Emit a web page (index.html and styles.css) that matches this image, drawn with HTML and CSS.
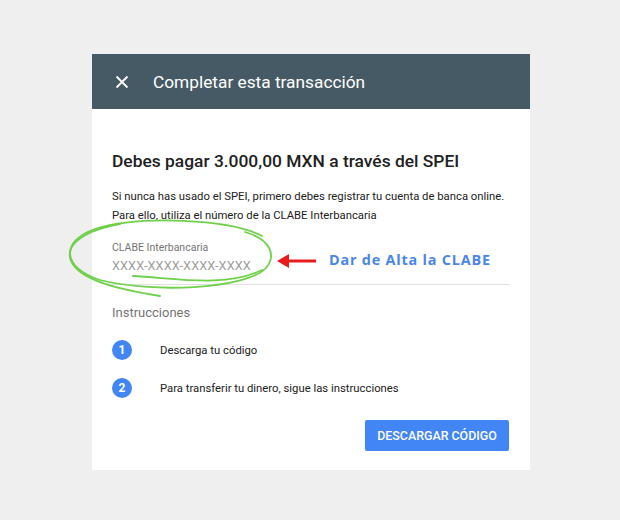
FILE: index.html
```html
<!DOCTYPE html>
<html lang="es">
<head>
<meta charset="utf-8">
<link rel="stylesheet" href="styles.css">
</head>
<body>
<div class="card">
  <div class="header">
    <svg class="close" width="14" height="14" viewBox="0 0 14 14"><path d="M1.5 1.5L12.5 12.5M12.5 1.5L1.5 12.5" stroke="#fff" stroke-width="1.8" fill="none"/></svg>
    <span class="header-title">Completar esta transacción</span>
  </div>
  <div class="content">
    <h1 class="title">Debes pagar 3.000,00 MXN a través del SPEI</h1>
    <p class="intro">Si nunca has usado el SPEI, primero debes registrar tu cuenta de banca online.<br>Para ello, utiliza el número de la CLABE Interbancaria</p>
    <div class="field">
      <div class="field-label">CLABE Interbancaria</div>
      <div class="field-value">XXXX-XXXX-XXXX-XXXX</div>
    </div>
    <div class="divider"></div>
    <div class="section">Instrucciones</div>
    <ol class="steps">
      <li class="step"><span class="num">1</span><span class="step-text">Descarga tu código</span></li>
      <li class="step"><span class="num">2</span><span class="step-text">Para transferir tu dinero, sigue las instrucciones</span></li>
    </ol>
    <div class="actions"><button class="btn">DESCARGAR CÓDIGO</button></div>
  </div>
</div>
<svg class="scribble" width="620" height="520" viewBox="0 0 620 520">
  <g fill="none" stroke="#6fd04a" stroke-width="1.8" stroke-linecap="round">
    <path d="M262,236 C230,219 140,215 95,229 C60,241 62,268 100,280 C150,293 245,290 266,268 C276,256 272,240 245,232"/>
    <path d="M120,224 C75,232 58,252 78,270 C95,285 135,292 160,296"/>
    <path d="M133,276 C175,278 225,288 262,270"/>
  </g>
  <path d="M287,261 L316,261" stroke="#e81c1c" stroke-width="3"/>
  <path d="M277,261 L289,254 L289,268 Z" fill="#e81c1c"/>
</svg>
<div class="note">Dar de Alta la CLABE</div>
</body>
</html>
```
FILE: styles.css
```css
* { box-sizing: border-box; }
body {
  margin: 0;
  background: #efefef;
  font-family: Roboto, "Liberation Sans", sans-serif;
  width: 620px;
  height: 520px;
  position: relative;
  overflow: hidden;
}
.card {
  margin: 54px 0 0 92px;
  width: 438px;
  height: 416px;
  background: #fff;
}
.header {
  height: 55px;
  background: #455a64;
  display: flex;
  align-items: center;
  padding-left: 23px;
}
.close { flex: none; }
.header-title {
  color: #fff;
  font-size: 17.3px;
  margin-left: 24px;
}
.content {
  padding: 40px 20px 0 20px;
}
.title {
  margin: 0;
  font-size: 17.4px;
  font-weight: 500;
  color: #212121;
  line-height: 24px;
}
.intro {
  margin: 14px 0 0;
  font-size: 11.3px;
  line-height: 19px;
  color: #212121;
}
.field {
  padding-top: 16px;
  height: 59px;
}
.field-label {
  font-size: 10.5px;
  color: #757575;
  line-height: 14px;
}
.field-value {
  font-size: 12.7px;
  color: #9e9e9e;
  letter-spacing: 0.1px;
  line-height: 18px;
  margin-top: 2px;
}
.divider {
  height: 1px;
  background: #e0e0e0;
}
.section {
  font-size: 13px;
  color: #757575;
  margin-top: 20px;
  line-height: 16px;
}
.steps {
  list-style: none;
  margin: 19px 0 0;
  padding: 0;
  display: flex;
  flex-direction: column;
  gap: 18px;
}
.step {
  display: flex;
  align-items: center;
  height: 20px;
}
.num {
  width: 20px;
  height: 20px;
  border-radius: 50%;
  background: #4285f4;
  color: #fff;
  font-size: 12px;
  font-weight: 700;
  display: flex;
  align-items: center;
  justify-content: center;
  flex: none;
}
.step-text {
  margin-left: 28px;
  font-size: 11.3px;
  color: #212121;
}
.actions {
  display: flex;
  justify-content: flex-end;
  margin-top: 22px;
  padding-right: 1px;
}
.btn {
  width: 144px;
  height: 31px;
  border: none;
  border-radius: 2px;
  background: #4285f4;
  color: #fff;
  font-family: Roboto, "Liberation Sans", sans-serif;
  font-size: 12.4px;
  font-weight: 500;
  padding: 0;
}
.scribble {
  position: absolute;
  left: 0;
  top: 0;
  pointer-events: none;
}
.note {
  position: absolute;
  left: 329px;
  top: 250px;
  font-family: "Open Sans", sans-serif;
  font-weight: 700;
  font-size: 14.4px;
  letter-spacing: 0.8px;
  color: #4a86e8;
}
```
